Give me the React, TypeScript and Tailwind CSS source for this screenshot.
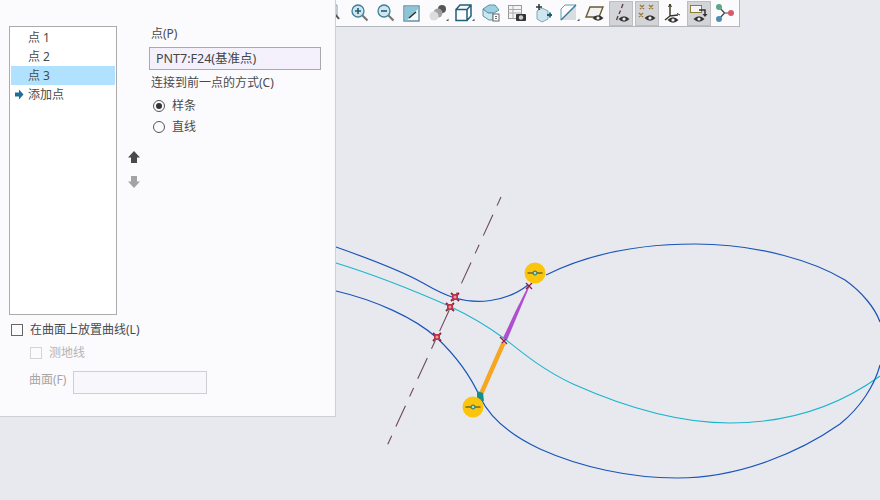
const font = { fontFamily: '"Noto Sans", "Noto Sans CJK SC", sans-serif' };

function Eye({ x = 9, y = 17 }: { x?: number; y?: number }) {
  return (
    <g>
      <path d={`M${x - 5.5} ${y}Q${x} ${y - 5.5} ${x + 5.5} ${y}Q${x} ${y + 5.5} ${x - 5.5} ${y}Z`} fill="#333" />
      <circle cx={x} cy={y} r="1.600" fill="#eee" />
    </g>
  );
}

function Tool({ children, active }: { children?: React.ReactNode; active?: boolean }) {
  return (
    <div className={`flex h-[25px] w-[24px] shrink-0 items-center justify-center ${active ? "border border-[#bdbec2] bg-[#d3d4d7]" : ""}`}>
      <svg className="shrink-0" width="22" height="22" viewBox="0 0 22 22" fill="none">{children}</svg>
    </div>
  );
}

const Corner = () => <path d="M19 19h2.500v-2.500z" fill="#555" />;

function Toolbar() {
  return (
    <div className="flex h-[27px] w-[404px] shrink-0 items-center overflow-hidden border-r border-b border-[#b5b6ba] bg-[#fbfbfe]">
      <div className="ml-[-14px] flex items-center gap-[2.1px]">
        <Tool>
          <path d="M8 3h6v10H8" stroke="#8a9aa5" />
          <path d="M13 13l3 4" stroke="#555" strokeWidth="2" />
        </Tool>
        <Tool>
          <circle cx="9" cy="9" r="6" fill="#cfe6ef" stroke="#3f7f98" strokeWidth="1.300" />
          <path d="M6 9h6M9 6v6" stroke="#1d5d78" strokeWidth="1.600" />
          <path d="M13.500 13.500l5 5" stroke="#777" strokeWidth="2.200" />
        </Tool>
        <Tool>
          <circle cx="9" cy="9" r="6" fill="#cfe6ef" stroke="#3f7f98" strokeWidth="1.300" />
          <path d="M6 9h6" stroke="#1d5d78" strokeWidth="1.600" />
          <path d="M13.500 13.500l5 5" stroke="#777" strokeWidth="2.200" />
        </Tool>
        <Tool>
          <rect x="3" y="4" width="15" height="15" fill="#f7fafb" stroke="#3d7a94" strokeWidth="1.200" />
          <path d="M3.500 4.500H17.500V6.500L6 18.500H3.500Z" fill="#8cc4d8" />
          <path d="M8 16l7-6" stroke="#2b2b2b" strokeWidth="1.500" />
        </Tool>
        <Tool>
          <circle cx="15" cy="7" r="4" fill="#555" />
          <circle cx="11" cy="11" r="4.500" fill="#a0a0a0" />
          <circle cx="7" cy="14" r="4.500" fill="#dcdcdc" />
          <Corner />
        </Tool>
        <Tool>
          <path d="M3 7.500h11v11H3zM3 7.500l4-4.500h11v11l-4 4.500M14 7.500l4-4.500" stroke="#1f5f7a" strokeWidth="1.500" />
          <Corner />
        </Tool>
        <Tool>
          <path d="M3 7l6-4h6l4 5-5 3H8z" fill="#9fd0e2" stroke="#5c93a8" />
          <path d="M3 7v7l6 4h4V11H8z" fill="#cfe6ef" stroke="#5c93a8" />
          <rect x="13" y="12" width="6" height="7" fill="#fff" stroke="#666" />
          <path d="M15 14.500h2M15 16.500h2" stroke="#666" />
        </Tool>
        <Tool>
          <rect x="2.500" y="3.500" width="13" height="13" fill="#f4f4f4" stroke="#999" />
          <path d="M2.500 7.500h13M2.500 11h13M7 3.500v13" stroke="#aaa" />
          <rect x="10" y="12" width="10" height="7" rx="1" fill="#333" />
          <circle cx="15" cy="15.500" r="2.200" fill="#ccc" />
        </Tool>
        <Tool>
          <path d="M5 9l5-3 6 3v8l-6 3-5-3z" fill="#cfe6ef" stroke="#7aa8ba" />
          <path d="M7 2v6M4 5h6" stroke="#333" strokeWidth="1.500" />
          <path d="M15 13h5M18 10.500v5" stroke="#1d5d78" strokeWidth="1.800" />
        </Tool>
        <Tool>
          <path d="M3 18L18 3v15z" fill="#d8dde0" />
          <path d="M3 18V7L7 3H18L3 18" stroke="#5d9ab3" />
          <path d="M3 18L18 3" stroke="#3a7893" strokeWidth="1.400" />
          <Corner />
        </Tool>
        <Tool>
          <path d="M6 5h13l-4 10H2z" fill="#f2f2f2" stroke="#6b5a32" strokeWidth="1.400" />
          <Eye x={14} y={16} />
        </Tool>
        <Tool active>
          <path d="M13 2l-1.500 4M10.500 8.500L9 12M8 14l-1.500 4" stroke="#5b3a3a" strokeWidth="1.300" />
          <Eye x={14} y={17} />
        </Tool>
        <Tool active>
          <path d="M4 3l4 4M8 3L4 7M13 3l4 4M17 3l-4 4M3 11l4 4M7 11l-4 4" stroke="#9c7a3a" strokeWidth="1.400" />
          <Eye x={14} y={16} />
        </Tool>
        <Tool>
          <path d="M8 2v12l8-1M8 14l-5 4" stroke="#3a3320" strokeWidth="1.400" />
          <path d="M8 2l-1.500 3M8 2l1.500 3M18 13l-3-1.500" stroke="#3a3320" />
          <Eye x={11} y={18} />
        </Tool>
        <Tool active>
          <rect x="2.500" y="3.500" width="11" height="7" fill="#f5f5f5" stroke="#8b8030" />
          <path d="M11 8h6v6" stroke="#333" strokeWidth="1.500" />
          <path d="M14.500 12l2.500 3 2.500-3z" fill="#333" />
          <Eye x={11} y={17} />
        </Tool>
        <Tool>
          <path d="M10.500 11L5 5M10.500 11L5 17M10.500 11H17" stroke="#444" strokeWidth="1.200" />
          <circle cx="5" cy="5" r="3" fill="#5aa88a" />
          <circle cx="5" cy="17" r="3" fill="#4f8fb5" />
          <circle cx="17" cy="11" r="3" fill="#d85a6a" />
        </Tool>
      </div>
    </div>
  );
}

function Marker({ x, y }: { x: number; y: number }) {
  return (
    <g>
      <path d={`M${x - 4} ${y - 4}L${x + 4} ${y + 4}M${x + 4} ${y - 4}L${x - 4} ${y + 4}`} stroke="#8e1f3e" strokeWidth="1.800" />
      <rect x={x - 3} y={y - 3} width="6" height="6" fill="#b8324f" />
      <circle cx={x} cy={y} r="1.500" fill="#ee9a80" />
    </g>
  );
}

function Pin({ x, y }: { x: number; y: number }) {
  return (
    <g>
      <circle cx={x} cy={y} r="10.500" fill="#fbc50d" />
      <path d={`M${x - 7.500} ${y}H${x + 7.500}`} stroke="#2b3a3a" strokeWidth="1" />
      <circle cx={x} cy={y} r="2" fill="#a8e0d0" stroke="#1e6f66" strokeWidth="1" />
    </g>
  );
}

const blue = "#1a55b8";
const cyan = "#1cb4cc";

function Canvas() {
  return (
    <svg className="absolute inset-0" width="880" height="500" viewBox="0 0 880 500" fill="none">
      <path d="M501 197L387 446" stroke="#6a4a5a" strokeWidth="1.100" strokeDasharray="9.500 10 23 10" />
      <path d="M336 263C375 275 415 291 449 306C475 318 490 328 505 339C525 355 545 371 573 384C620 405 675 423 730 423C790 423 840 405 880 376" stroke={cyan} strokeWidth="1.100" />
      <path d="M336 247C370 259 400 270 423 283C435 290 445 295 455 298C475 304 505 303 528 285" stroke={blue} strokeWidth="1.200" />
      <path d="M546 275C590 253 640 244 695 244C760 244 815 262 845 280C862 292 875 308 880 322" stroke={blue} strokeWidth="1.200" />
      <path d="M336 291C375 300 415 318 437 338C455 355 470 375 480 397C490 418 510 435 540 449C580 467 630 478 677 478C740 478 800 452 840 424C860 408 875 385 880 365" stroke={blue} strokeWidth="1.200" />
      <path d="M501.500 342L505.500 344L483 395L479 393Z" fill="#f5a623" />
      <path d="M503 338L507 340L518.500 312.700L529.600 286.300L528.400 285.700L515.500 311.300Z" fill="#ae4fd0" />
      <path d="M477 391L483 393L484 401L477 400Z" fill="#13908a" />
      <Marker x={455} y={297} />
      <Marker x={450} y={307} />
      <Marker x={437} y={337} />
      <path d="M500 337l7 7M506 339l-4 4" stroke="#8e1f3e" strokeWidth="1.400" />
      <path d="M526 283l6 6M532 283l-6 6" stroke="#8e1f3e" strokeWidth="1.400" />
      <Pin x={535} y={273} />
      <Pin x={473} y={407} />
    </svg>
  );
}

function ListRow({ label, selected, add }: { label: string; selected?: boolean; add?: boolean }) {
  return (
    <div className={`relative flex h-[19px] items-center pl-[17px] ${selected ? "bg-[#b0e2ff]" : ""}`}>
      {add && (
        <svg className="absolute left-[3px] top-[4px]" width="10" height="11" viewBox="0 0 10 11">
          <path d="M1 3.500h4V.500l4.500 5-4.500 5v-3H1z" fill="#1e6e96" />
        </svg>
      )}
      {label}
    </div>
  );
}

function Panel() {
  return (
    <div className="relative flex h-[417px] w-[336px] shrink-0 flex-col border-r border-b border-[#cfd0d4] bg-[#fbfbfe] pl-[9px] pt-[26px] text-[12px] leading-[16px] text-[#4a4a4a]" style={font}>
      <div className="flex h-[289px]">
        <div className="h-[289px] w-[108px] shrink-0 border border-[#ababab] bg-white p-[1px]">
          <ListRow label="点 1" />
          <ListRow label="点 2" />
          <ListRow label="点 3" selected />
          <ListRow label="添加点" add />
        </div>
        <div className="flex w-[10px] shrink-0 flex-col pl-[10px] pt-[124px]">
          <svg className="shrink-0" width="14" height="14" viewBox="0 0 14 14"><path d="M7 1L13 7.500H10V13H4V7.500H1Z" fill="#4a4a4a" /></svg>
          <svg className="mt-[11px] shrink-0" width="14" height="14" viewBox="0 0 14 14"><path d="M7 13L13 6.500H10V1H4V6.500H1Z" fill="#a3a3a3" /></svg>
        </div>
        <div className="ml-[22px] flex w-[172px] flex-col">
          <div className="pl-[2px]">点(P)</div>
          <div className="mt-[5px] flex h-[23px] items-center border border-[#a9a9a9] bg-[#f4f1fd] pl-[6px] text-[12.500px] text-[#444]">PNT7:F24(基准点)</div>
          <div className="mt-[5px] pl-[2px]">连接到前一点的方式(C)</div>
          <div className="mt-[4px] flex h-[21px] items-center pl-[4px]">
            <span className="flex h-[12px] w-[12px] items-center justify-center rounded-full border border-[#555]"><span className="h-[6px] w-[6px] rounded-full bg-[#333]" /></span>
            <span className="ml-[7px]">样条</span>
          </div>
          <div className="flex h-[21px] items-center pl-[4px]">
            <span className="h-[12px] w-[12px] rounded-full border border-[#555]" />
            <span className="ml-[7px]">直线</span>
          </div>
        </div>
      </div>
      <div className="mt-[8px] flex h-[14px] items-center pl-[2px]">
        <span className="h-[12px] w-[12px] border border-[#666]" />
        <span className="ml-[7px]">在曲面上放置曲线(L)</span>
      </div>
      <div className="mt-[9px] flex h-[14px] items-center pl-[21px] text-[#b4b4b4]">
        <span className="h-[12px] w-[12px] border border-[#d4d4d4]" />
        <span className="ml-[7px]">测地线</span>
      </div>
      <div className="mt-[11px] flex h-[23px] items-start pl-[20px] text-[#a6a6a6]">
        <span className="mt-[1px]">曲面(F)</span>
        <span className="ml-[7px] h-[23px] w-[134px] border border-[#cfcfcf] bg-[#f8f7fb]" />
      </div>
    </div>
  );
}

export default function App() {
  return (
    <div className="relative h-[500px] w-[880px] overflow-hidden bg-[#e8e9ee]">
      <Canvas />
      <div className="relative flex items-start">
        <Panel />
        <Toolbar />
      </div>
    </div>
  );
}
